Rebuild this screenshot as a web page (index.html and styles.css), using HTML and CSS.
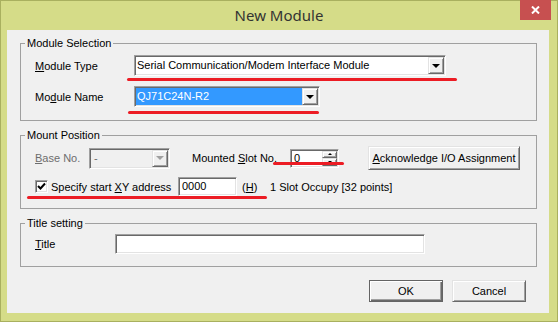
FILE: index.html
```html
<!DOCTYPE html>
<html lang="en">
<head>
<meta charset="UTF-8">
<title>New Module</title>
<link rel="stylesheet" href="styles.css">
</head>
<body>

<div class="window">
  <header class="titlebar">
    <h1 class="title">New Module</h1>
    <div class="close">
      <svg width="9" height="8" viewBox="0 0 9 8"><path d="M1 0.5 L8 7.5 M8 0.5 L1 7.5" stroke="#fff" stroke-width="2"/></svg>
    </div>
  </header>

  <main class="client">
    <fieldset class="group group-select">
      <legend>Module Selection</legend>
      <div class="row">
        <span class="lbl lbl-select"><u>M</u>odule Type</span>
        <div class="combo combo-type">
          <span class="combo-text">Serial Communication/Modem Interface Module</span>
          <span class="drop"><i class="tri"></i></span>
        </div>
      </div>
      <div class="row">
        <span class="lbl lbl-select">Mo<u>d</u>ule Name</span>
        <div class="combo combo-name">
          <span class="combo-text sel">QJ71C24N-R2</span>
          <span class="drop"><i class="tri"></i></span>
        </div>
      </div>
    </fieldset>

    <fieldset class="group group-mount">
      <legend>Mount Position</legend>
      <div class="row">
        <span class="lbl lbl-base disabled"><u>B</u>ase No.</span>
        <div class="combo combo-base disabled">
          <span class="combo-text">-</span>
          <span class="drop"><i class="tri"></i></span>
        </div>
        <span class="lbl lbl-slot">Mounted <u>S</u>lot No.</span>
        <div class="spin">
          <span class="spin-text">0</span>
          <span class="spin-btns">
            <span class="spin-btn"><i class="tri-up"></i></span>
            <span class="spin-btn"><i class="tri-small"></i></span>
          </span>
        </div>
        <button class="btn btn-ack"><u>A</u>cknowledge I/O Assignment</button>
      </div>
      <div class="row row-xy">
        <span class="check-label">
          <span class="check">
            <svg width="9" height="9" viewBox="0 0 9 9"><path d="M1 4 L3.5 6.5 L8 1.5" fill="none" stroke="#000" stroke-width="2"/></svg>
          </span>
          <span>Specify start <u>X</u>Y address</span>
        </span>
        <span class="edit edit-xy">0000</span>
        <span class="hex">(<u>H</u>)</span>
        <span>1 Slot Occupy [32 points]</span>
      </div>
    </fieldset>

    <fieldset class="group group-title">
      <legend>Title setting</legend>
      <div class="row">
        <span class="lbl lbl-title"><u>T</u>itle</span>
        <span class="edit edit-title"></span>
      </div>
    </fieldset>

    <div class="actions">
      <button class="btn btn-dlg btn-default">OK</button>
      <button class="btn btn-dlg">Cancel</button>
    </div>
  </main>

  <!-- red annotation strokes drawn over the dialog -->
  <div class="mark mark-type"></div>
  <div class="mark mark-name"></div>
  <div class="mark mark-slot"></div>
  <div class="mark mark-xy"></div>
</div>

</body>
</html>
```

FILE: styles.css
```css
* {
  box-sizing: border-box;
}
body {
  margin: 0;
  font-family: "Liberation Sans", Arial, sans-serif;
  font-size: 11px;
  color: #000;
}
.window {
  position: relative;
  width: 558px;
  height: 322px;
  border: 1px solid #a9b05f;
  background: #d5dc88;
  display: flex;
  flex-direction: column;
}
.titlebar {
  height: 29px;
  display: grid;
  grid-template-columns: 1fr auto 1fr;
  align-items: start;
}
.title {
  grid-column: 2;
  margin: 0;
  font-family: "Noto Sans", sans-serif;
  font-weight: normal;
  font-size: 15px;
  line-height: 29px;
  color: #333;
}
.close {
  grid-column: 3;
  justify-self: end;
  width: 31px;
  height: 20px;
  margin: -1px 6px 0 0;
  background: #c75050;
  display: flex;
  align-items: center;
  justify-content: center;
}
.client {
  flex: 1;
  margin: 0 8px 8px 6px;
  padding-top: 7px;
  background: #f0f0f0;
  display: flex;
  flex-direction: column;
}

/* group boxes */
.group {
  margin: 0 12px 0 13px;
  padding: 4px 0 12px 4px;
  border: 1px solid #a0a0a0;
  min-width: 0;
}
.group + .group {
  margin-top: 8px;
}
.group legend {
  padding: 0 2px;
  line-height: 13px;
}
.group-select {
  padding-top: 5px;
  padding-bottom: 13px;
}
.row {
  display: flex;
  align-items: center;
  margin-left: 10px;
}
.group-select .row + .row {
  margin-top: 10px;
}
.row-xy {
  margin-top: 7px;
}
.lbl-select {
  width: 99px;
}
.lbl-base {
  width: 54px;
}
.lbl-slot {
  width: 98px;
  margin-left: 22px;
}
.lbl-title {
  width: 80px;
}
.disabled {
  color: #6d6d6d;
}

/* sunken controls */
.combo, .spin, .edit, .check {
  border: 1px solid;
  border-color: #a0a0a0 #fff #fff #a0a0a0;
  box-shadow: inset 1px 1px #696969, inset -1px -1px #e3e3e3;
  background: #fff;
}
.combo {
  display: flex;
  height: 21px;
  padding: 1px;
}
.combo-type {
  width: 312px;
}
.combo-name {
  width: 186px;
}
.combo-base {
  width: 81px;
  background: #f0f0f0;
}
.combo-text {
  flex: 1;
  line-height: 17px;
  padding-left: 1px;
  white-space: nowrap;
  overflow: hidden;
}
.combo-text.sel {
  background: #3399ff;
  color: #fff;
}
.combo-base .combo-text {
  padding-left: 3px;
}

/* raised parts */
.drop, .spin-btn, .btn {
  background: #f0f0f0;
  border: 1px solid;
  border-color: #e3e3e3 #696969 #696969 #e3e3e3;
  box-shadow: inset 1px 1px #fff, inset -1px -1px #a0a0a0;
}
.drop {
  width: 16px;
  height: 17px;
  display: flex;
  align-items: center;
  justify-content: center;
}
.tri {
  width: 0;
  border-left: 4px solid transparent;
  border-right: 4px solid transparent;
  border-top: 4px solid #000;
}
.combo-base .tri {
  border-top-color: #a0a0a0;
}
.spin {
  display: flex;
  width: 49px;
  height: 19px;
  padding: 1px;
}
.spin-text {
  flex: 1;
  line-height: 15px;
  padding-left: 2px;
}
.spin-btns {
  width: 15px;
  display: flex;
  flex-direction: column;
}
.spin-btn {
  flex: 1;
  display: flex;
  align-items: center;
  justify-content: center;
}
.tri-up, .tri-small {
  width: 0;
  border-left: 2px solid transparent;
  border-right: 2px solid transparent;
}
.tri-up {
  border-bottom: 2px solid #000;
}
.tri-small {
  border-top: 2px solid #000;
}
.btn {
  font-family: inherit;
  font-size: 11px;
  color: #000;
  padding: 0;
}
.btn-ack {
  width: 152px;
  height: 24px;
  margin-left: 29px;
}
.check-label {
  display: flex;
  align-items: center;
  width: 143px;
}
.check {
  width: 13px;
  height: 13px;
  margin-right: 3px;
  display: flex;
  align-items: center;
  justify-content: center;
}
.edit {
  display: block;
  padding: 0 3px;
}
.edit-xy {
  width: 59px;
  height: 19px;
  line-height: 17px;
}
.edit-title {
  width: 310px;
  height: 20px;
}
.hex {
  width: 28px;
  margin-left: 5px;
}

/* dialog buttons */
.actions {
  display: flex;
  justify-content: flex-end;
  gap: 9px;
  margin-top: 13px;
  padding-right: 23px;
}
.btn-dlg {
  width: 74px;
  height: 22px;
}
.btn-default {
  border-color: #646464;
  box-shadow: inset 1px 1px #fff, inset -1px -1px #696969, inset -2px -2px #a0a0a0;
}

/* red annotation strokes */
.mark {
  position: absolute;
  height: 3px;
  background: #ec1c24;
  border-radius: 2px;
}
.mark-type {
  left: 126px;
  top: 77px;
  width: 330px;
}
.mark-name {
  left: 127px;
  top: 110px;
  width: 191px;
}
.mark-slot {
  left: 272px;
  top: 161px;
  width: 71px;
}
.mark-xy {
  left: 26px;
  top: 195px;
  width: 240px;
}
```
